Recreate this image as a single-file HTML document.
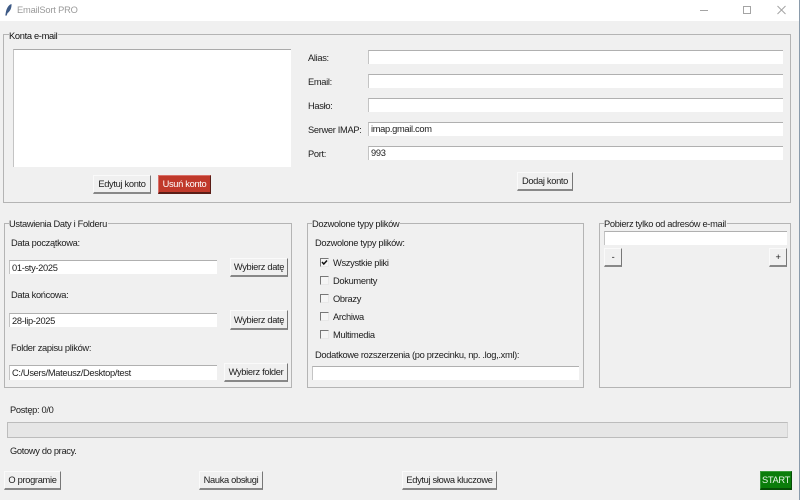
<!DOCTYPE html>
<html lang="pl"><head><meta charset="utf-8"><title>EmailSort PRO</title>
<style>
html,body{margin:0;padding:0;width:800px;height:500px;overflow:hidden;background:#f0f0f0}
body{position:relative;font-family:"Liberation Sans",sans-serif;font-size:9.3px;letter-spacing:-.32px;color:#1c1c1c}
#w{position:absolute;left:0;top:0;width:800px;height:500px;filter:blur(.3px)}
#bar{position:absolute;left:0;top:0;width:800px;height:21px;background:#fff}
#edge{position:absolute;left:799px;top:0;width:1px;height:500px;background:#8a9bab}
.t{position:absolute;white-space:nowrap;line-height:12px;background:none;margin-top:1px}
.f{position:absolute;border:1px solid #b4b4b4;box-sizing:border-box}
.l{position:absolute;white-space:nowrap;line-height:12px;background:#f0f0f0;padding-right:1px;margin-top:1px}
.e{position:absolute;box-sizing:border-box;background:#fff;border-top:1px solid #b0b0b0;border-left:1px solid #c4c4c4;padding-left:2px;line-height:14px;white-space:nowrap;color:#1c1c1c}
.b{position:absolute;box-sizing:border-box;background:#f0f0f0;border-top:1px solid #fafafa;border-left:1px solid #fafafa;border-right:1px solid #777;border-bottom:2px solid #888;text-align:center;white-space:nowrap;color:#1c1c1c}
.c{position:absolute;left:320px;width:9px;height:9px;box-sizing:border-box;background:#f5f5f5;border-top:1px solid #777;border-left:1px solid #777;border-right:1px solid #e8e8e8;border-bottom:1px solid #e8e8e8}
</style></head><body><div id="w">
<div id="bar"></div>
<svg style="position:absolute;left:3px;top:3px" width="12" height="14" viewBox="0 0 12 14"><path d="M8.5 1C6 1.5 3.5 5 2.8 9.5L2.3 12.5 3.6 12.6 4.6 10C7 8.5 8.8 5 8.5 1Z" fill="#3d5a86"/></svg>
<div class="t" style="left:17px;top:3px;color:#9a9a9a;letter-spacing:-.18px">EmailSort PRO</div>
<svg style="position:absolute;left:700px;top:0" width="90" height="21" viewBox="0 0 90 21" fill="none" stroke="#a4a4a4" stroke-width="1"><path d="M0 10.5H8"/><rect x="43.5" y="6.5" width="7" height="7"/><path d="M77.5 6L85.5 14M85.5 6L77.5 14"/></svg>
<div id="edge"></div>

<div class="f" style="left:3px;top:34px;width:788px;height:169px"></div>
<div class="l" style="left:9px;top:29px;color:#111">Konta e-mail</div>
<div class="e" style="left:13px;top:49px;width:278px;height:118px;border-top-color:#aaa"></div>
<div class="b" style="left:93px;top:175px;width:58px;height:19px;line-height:17px">Edytuj konto</div>
<div class="b" style="left:158px;top:175px;width:53px;height:19px;line-height:17px;background:#c0392b;color:#fff;border-color:#d9706a #5a1d17 #5a1d17 #d9706a">Usuń konto</div>
<div class="t" style="left:308px;top:51px">Alias:</div>
<div class="t" style="left:308px;top:75px">Email:</div>
<div class="t" style="left:308px;top:99px">Hasło:</div>
<div class="t" style="left:308px;top:123px">Serwer IMAP:</div>
<div class="t" style="left:308px;top:147px">Port:</div>
<div class="e" style="left:368px;top:50px;width:415px;height:14px"></div>
<div class="e" style="left:368px;top:74px;width:415px;height:14px"></div>
<div class="e" style="left:368px;top:98px;width:415px;height:14px"></div>
<div class="e" style="left:368px;top:122px;width:415px;height:14px;line-height:13px">imap.gmail.com</div>
<div class="e" style="left:368px;top:146px;width:415px;height:14px;line-height:13px">993</div>
<div class="b" style="left:517px;top:172px;width:56px;height:19px;line-height:17px">Dodaj konto</div>

<div class="f" style="left:4px;top:223px;width:288px;height:165px"></div>
<div class="l" style="left:9px;top:217px">Ustawienia Daty i Folderu</div>
<div class="t" style="left:11px;top:236px">Data początkowa:</div>
<div class="e" style="left:9px;top:260px;width:208px;height:14px">01-sty-2025</div>
<div class="b" style="left:230px;top:258px;width:58px;height:19px;line-height:17px">Wybierz datę</div>
<div class="t" style="left:11px;top:288px">Data końcowa:</div>
<div class="e" style="left:9px;top:313px;width:208px;height:14px">28-lip-2025</div>
<div class="b" style="left:230px;top:310px;width:58px;height:20px;line-height:18px">Wybierz datę</div>
<div class="t" style="left:11px;top:341px">Folder zapisu plików:</div>
<div class="e" style="left:9px;top:365px;width:208px;height:15px">C:/Users/Mateusz/Desktop/test</div>
<div class="b" style="left:224px;top:363px;width:64px;height:19px;line-height:17px">Wybierz folder</div>

<div class="f" style="left:307px;top:223px;width:277px;height:165px"></div>
<div class="l" style="left:312px;top:217px">Dozwolone typy plików</div>
<div class="t" style="left:315px;top:236px">Dozwolone typy plików:</div>
<div class="c" style="top:258px"></div>
<svg style="position:absolute;left:320px;top:258px" width="9" height="9" viewBox="0 0 9 9"><path d="M2 4L3.8 6L7 2.5" fill="none" stroke="#111" stroke-width="1.5"/></svg>
<div class="t" style="left:333px;top:256px">Wszystkie pliki</div>
<div class="c" style="top:276px"></div>
<div class="t" style="left:333px;top:274px">Dokumenty</div>
<div class="c" style="top:294px"></div>
<div class="t" style="left:333px;top:292px">Obrazy</div>
<div class="c" style="top:312px"></div>
<div class="t" style="left:333px;top:310px">Archiwa</div>
<div class="c" style="top:330px"></div>
<div class="t" style="left:333px;top:328px">Multimedia</div>
<div class="t" style="left:315px;top:348px">Dodatkowe rozszerzenia (po przecinku, np. .log,.xml):</div>
<div class="e" style="left:312px;top:366px;width:267px;height:14px"></div>

<div class="f" style="left:599px;top:223px;width:192px;height:165px"></div>
<div class="l" style="left:604px;top:217px">Pobierz tylko od adresów e-mail</div>
<div class="e" style="left:604px;top:231px;width:183px;height:14px"></div>
<div class="b" style="left:604px;top:248px;width:18px;height:19px;line-height:17px">-</div>
<div class="b" style="left:769px;top:248px;width:18px;height:19px;line-height:17px">+</div>

<div class="t" style="left:10px;top:403px">Postęp: 0/0</div>
<div style="position:absolute;left:7px;top:422px;width:781px;height:16px;box-sizing:border-box;background:#e6e6e6;border:1px solid #bcbcbc;border-right-color:#d4d4d4"></div>
<div class="t" style="left:10px;top:444px">Gotowy do pracy.</div>
<div class="b" style="left:4px;top:471px;width:57px;height:19px;line-height:17px">O programie</div>
<div class="b" style="left:199px;top:471px;width:64px;height:19px;line-height:17px">Nauka obsługi</div>
<div class="b" style="left:402px;top:471px;width:95px;height:19px;line-height:17px">Edytuj słowa kluczowe</div>
<div class="b" style="left:760px;top:471px;width:32px;height:19px;line-height:17px;background:#0a7d0a;color:#e8f5e8;border-color:#3a9a3a #064d06 #064d06 #3a9a3a">START</div>
</div></body></html>
